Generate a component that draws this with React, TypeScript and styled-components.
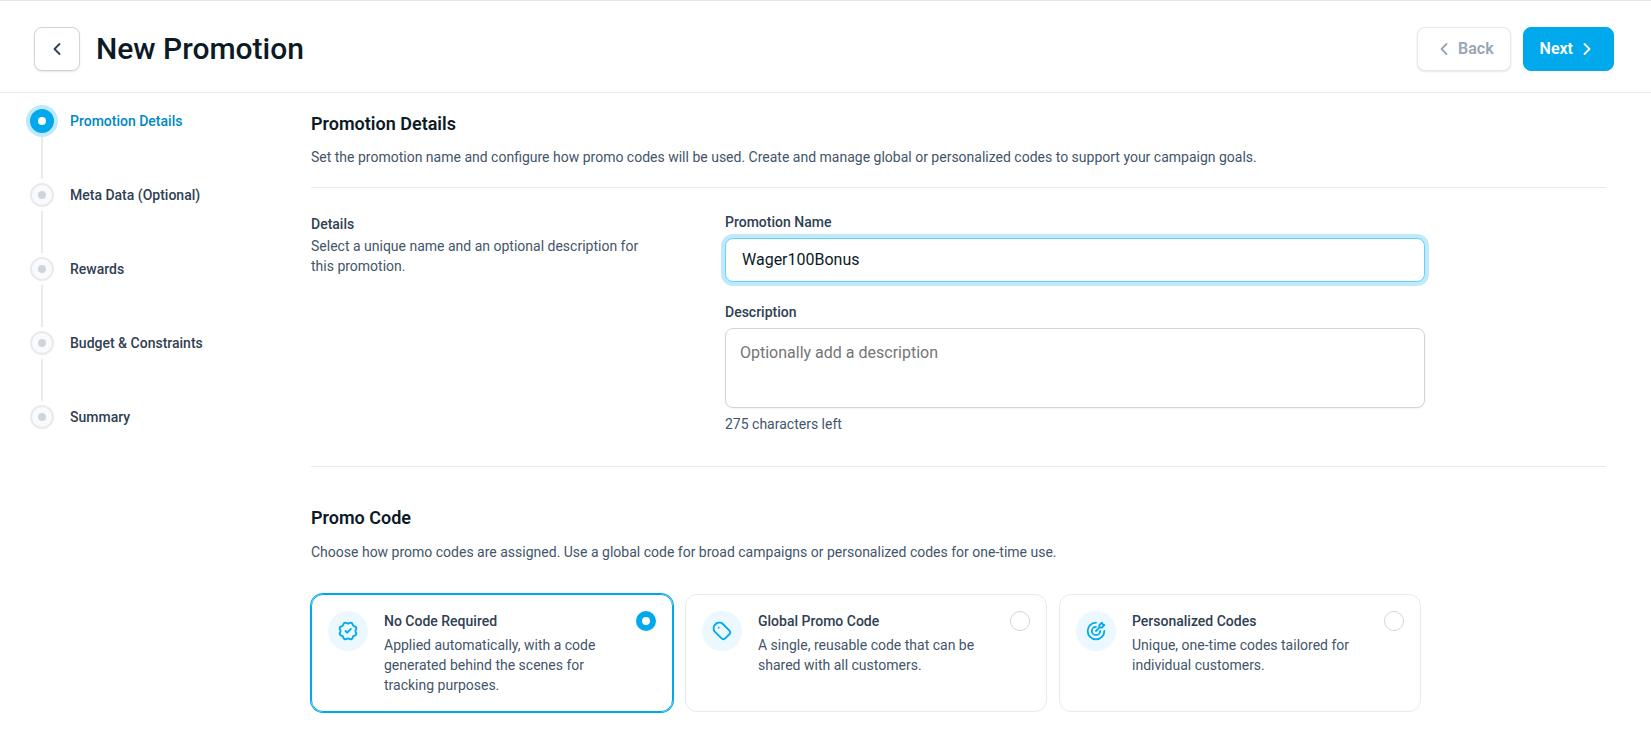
import React, { useState } from "react";
import styled, { createGlobalStyle, css } from "styled-components";

const color = {
  brand: "#00a9eb",
  brandText: "#0088c6",
  brandSoft: "#ebf8ff",
  brandRing: "#c0e9fb",
  brandBorder: "#62d3f8",
  ink: "#0c1a26",
  heading: "#2f4053",
  body: "#43556a",
  muted: "#98a5b5",
  line: "#e9eaec",
  field: "#cfd5dd",
};

const GlobalStyle = createGlobalStyle`
  *, *::before, *::after { box-sizing: border-box; }
  body {
    margin: 0;
    background: #fff;
    color: ${color.body};
    font-family: Roboto, "Liberation Sans", sans-serif;
    font-size: 14px;
    line-height: 20px;
  }
  h1, h2, h3, p, ol, fieldset { margin: 0; padding: 0; }
  button, input, textarea { font-family: inherit; }
`;

const Header = styled.header`
  display: flex;
  align-items: center;
  gap: 16px;
  padding: 26px 37px 21px 34px;
  border-top: 1px solid #e4e5e6;
  border-bottom: 1px solid ${color.line};
`;

const PageTitle = styled.h1`
  flex: 1;
  color: ${color.ink};
  font-size: 30px;
  line-height: 40px;
  font-weight: 500;
`;

const Actions = styled.div`
  display: flex;
  gap: 12px;
`;

const Button = styled.button<{ $kind: "outline" | "quiet" | "primary"; $iconOnly?: boolean }>`
  display: flex;
  align-items: center;
  justify-content: center;
  gap: 4px;
  height: 44px;
  padding: 0 ${(p) => (p.$iconOnly ? 12 : 16)}px;
  border: 1px solid ${color.field};
  border-radius: 8px;
  background: #fff;
  color: ${color.heading};
  font-size: 16px;
  line-height: 24px;
  font-weight: 600;
  box-shadow: 0 1px 2px rgba(16, 24, 40, 0.1);
  cursor: pointer;
  ${(p) =>
    p.$kind === "quiet" &&
    css`
      border-color: #e6e8eb;
      color: ${color.muted};
    `}
  ${(p) =>
    p.$kind === "primary" &&
    css`
      border-color: ${color.brand};
      background: ${color.brand};
      color: #fff;
      box-shadow: none;
    `}
`;

const Body = styled.div`
  display: flex;
  align-items: flex-start;
  padding: 16px 45px 28px 30px;
`;

const Steps = styled.ol`
  flex: 0 0 281px;
  list-style: none;
`;

const Step = styled.li<{ $active?: boolean }>`
  display: grid;
  grid-template-columns: 24px 1fr;
  column-gap: 16px;
  row-gap: 4px;
  align-items: center;
  margin-bottom: 4px;
  color: ${(p) => (p.$active ? color.brandText : color.heading)};
  font-weight: 500;
`;

const StepDot = styled.span<{ $active?: boolean }>`
  display: flex;
  align-items: center;
  justify-content: center;
  height: 24px;
  border: 2px solid ${(p) => (p.$active ? color.brand : "#e8eaed")};
  border-radius: 50%;
  background: ${(p) => (p.$active ? color.brand : "#f9fafc")};
  box-shadow: ${(p) => (p.$active ? `0 0 0 4px ${color.brandRing}` : "none")};

  &::before {
    content: "";
    width: 8px;
    height: 8px;
    border-radius: 50%;
    background: ${(p) => (p.$active ? "#fff" : "#cfd5dd")};
  }
`;

const StepLine = styled.span`
  justify-self: center;
  width: 2px;
  height: 42px;
  background: #e8eaed;
`;

const Content = styled.main`
  flex: 1;
  min-width: 0;
  padding-top: 1px;
`;

const SectionHead = styled.header<{ $ruled?: boolean }>`
  display: flex;
  flex-direction: column;
  gap: 10px;
  ${(p) =>
    p.$ruled &&
    css`
      gap: 9px;
      padding-bottom: 20px;
      border-bottom: 1px solid ${color.line};
    `}
`;

const SectionTitle = styled.h2`
  color: ${color.ink};
  font-size: 18px;
  line-height: 28px;
  font-weight: 600;
`;

const DetailsRow = styled.section`
  display: flex;
  padding: 24px 0 32px;
  border-bottom: 1px solid ${color.line};
`;

const Intro = styled.div`
  flex: 0 0 414px;
  display: flex;
  flex-direction: column;
  gap: 2px;
  padding: 2px 80px 0 0;
`;

const ItemTitle = styled.h3`
  color: ${color.heading};
  font-size: 14px;
  line-height: 20px;
  font-weight: 500;
`;

const Fields = styled.div`
  flex: 1;
  max-width: 700px;
  display: flex;
  flex-direction: column;
  gap: 20px;
`;

const Field = styled.div`
  display: flex;
  flex-direction: column;
  gap: 6px;
`;

const Label = styled.label`
  color: ${color.heading};
  font-weight: 500;
`;

const fieldBox = css`
  display: block;
  width: 100%;
  border: 1px solid ${color.field};
  border-radius: 8px;
  background: #fff;
  color: ${color.ink};
  font-size: 16px;
  line-height: 24px;
  outline: none;
`;

const TextInput = styled.input`
  ${fieldBox}
  height: 44px;
  padding: 0 16px 2px;
  border-color: ${color.brandBorder};
  box-shadow: 0 0 0 4px ${color.brandRing};
`;

const TextArea = styled.textarea`
  ${fieldBox}
  height: 80px;
  padding: 12px 14px;
  resize: none;
  box-shadow: 0 1px 2px rgba(16, 24, 40, 0.05);

  &::placeholder {
    color: #757575;
  }
`;

const CodeSection = styled.section`
  padding-top: 37px;
`;

const Cards = styled.fieldset`
  display: grid;
  grid-template-columns: repeat(3, 1fr);
  gap: 12px;
  max-width: 1110px;
  margin-top: 32px;
  border: 0;
`;

const Card = styled.label<{ $selected: boolean }>`
  display: flex;
  align-items: flex-start;
  gap: 16px;
  padding: 16px;
  border: 1px solid ${(p) => (p.$selected ? color.brand : color.line)};
  border-radius: 12px;
  box-shadow: ${(p) => (p.$selected ? `0 0 0 1px ${color.brand}` : "none")};
  cursor: pointer;
`;

const CardIcon = styled.span`
  flex: none;
  display: flex;
  align-items: center;
  justify-content: center;
  width: 40px;
  height: 40px;
  border-radius: 50%;
  background: ${color.brandSoft};
  color: ${color.brand};
`;

const CardText = styled.span`
  flex: 1;
  display: flex;
  flex-direction: column;
  gap: 4px;
`;

const CardTitle = styled.span`
  color: ${color.heading};
  font-weight: 500;
`;

const Radio = styled.input`
  appearance: none;
  flex: none;
  width: 20px;
  height: 20px;
  margin: 0;
  border: 1px solid ${color.field};
  border-radius: 50%;
  background: #fff;

  &:checked {
    border: 6px solid ${color.brand};
  }
`;

const Svg = ({ d, weight = 2.2 }: { d: string; weight?: number }) => (
  <svg
    width={20}
    height={20}
    viewBox="0 0 24 24"
    fill="none"
    stroke="currentColor"
    strokeWidth={weight}
    strokeLinecap="round"
    strokeLinejoin="round"
    aria-hidden="true"
  >
    <path d={d} />
  </svg>
);

const icons = {
  left: "M15 18L9 12L15 6",
  right: "M9 18L15 12L9 6",
  verified:
    "M9 12L11 14L15.5 9.5M17.9 5C18.107 5.497 18.502 5.892 19 6.099L20.745 6.822C21.243 7.028 21.639 7.424 21.845 7.922C22.052 8.42 22.052 8.98 21.845 9.478L21.123 11.222C20.916 11.72 20.916 12.28 21.123 12.778L21.845 14.522C22.052 15.02 22.052 15.58 21.845 16.078C21.639 16.576 21.243 16.972 20.745 17.178L19 17.901C18.502 18.107 18.107 18.502 17.9 19L17.177 20.745C16.971 21.243 16.575 21.639 16.077 21.845C15.579 22.052 15.02 22.052 14.522 21.845L12.778 21.123C12.28 20.917 11.72 20.917 11.222 21.123L9.477 21.845C8.979 22.052 8.42 22.052 7.922 21.845C7.424 21.639 7.029 21.243 6.823 20.745L6.1 19C5.893 18.502 5.498 18.107 5 17.9L3.255 17.177C2.757 16.971 2.362 16.575 2.155 16.078C1.949 15.58 1.949 15.02 2.155 14.522L2.877 12.778C3.083 12.28 3.083 11.72 2.877 11.222L2.155 9.478C1.949 8.98 1.949 8.42 2.155 7.922C2.362 7.424 2.757 7.028 3.255 6.822L5 6.099C5.497 5.892 5.892 5.497 6.1 5L6.822 3.255C7.028 2.757 7.424 2.361 7.922 2.155C8.42 1.948 8.98 1.948 9.478 2.155L11.222 2.877C11.72 3.083 12.28 3.083 12.778 2.877L14.522 2.155C15.02 1.949 15.58 1.949 16.078 2.155C16.576 2.362 16.972 2.757 17.178 3.255Z",
  tag: "M8 8H8.01M2 9.8V7.8C2 6.7 2.3 5.9 3 5.2L5.2 3C5.9 2.3 6.7 2 7.8 2H9.8C10.9 2 11.7 2.3 12.4 3L20.6 11.2C22.2 12.8 22.2 14.6 20.6 16.2L16.2 20.6C14.6 22.2 12.8 22.2 11.2 20.6L3 12.4C2.3 11.7 2 10.9 2 9.8Z",
  target:
    "M16 8V5L19 2L20 4L22 5L19 8H16ZM16 8L12 12M22 12C22 17.523 17.523 22 12 22C6.477 22 2 17.523 2 12C2 6.477 6.477 2 12 2M17 12C17 14.761 14.761 17 12 17C9.239 17 7 14.761 7 12C7 9.239 9.239 7 12 7",
};

const steps = ["Promotion Details", "Meta Data (Optional)", "Rewards", "Budget & Constraints", "Summary"];

const codeTypes = [
  {
    id: "none",
    icon: icons.verified,
    title: "No Code Required",
    text: "Applied automatically, with a code generated behind the scenes for tracking purposes.",
  },
  {
    id: "global",
    icon: icons.tag,
    title: "Global Promo Code",
    text: "A single, reusable code that can be shared with all customers.",
  },
  {
    id: "personal",
    icon: icons.target,
    title: "Personalized Codes",
    text: "Unique, one-time codes tailored for individual customers.",
  },
];

const MAX_DESCRIPTION = 275;

export default function App() {
  const [name, setName] = useState("Wager100Bonus");
  const [description, setDescription] = useState("");
  const [codeType, setCodeType] = useState("none");

  return (
    <>
      <GlobalStyle />
      <Header>
        <Button type="button" $kind="outline" $iconOnly aria-label="Go back">
          <Svg d={icons.left} />
        </Button>
        <PageTitle>New Promotion</PageTitle>
        <Actions>
          <Button type="button" $kind="quiet">
            <Svg d={icons.left} />
            Back
          </Button>
          <Button type="button" $kind="primary">
            Next
            <Svg d={icons.right} />
          </Button>
        </Actions>
      </Header>

      <Body>
        <Steps>
          {steps.map((step, i) => (
            <Step key={step} $active={i === 0} aria-current={i === 0 ? "step" : undefined}>
              <StepDot $active={i === 0} />
              <span>{step}</span>
              {i < steps.length - 1 && <StepLine />}
            </Step>
          ))}
        </Steps>

        <Content>
          <SectionHead $ruled>
            <SectionTitle>Promotion Details</SectionTitle>
            <p>
              Set the promotion name and configure how promo codes will be used. Create and manage global or
              personalized codes to support your campaign goals.
            </p>
          </SectionHead>

          <DetailsRow>
            <Intro>
              <ItemTitle>Details</ItemTitle>
              <p>Select a unique name and an optional description for this promotion.</p>
            </Intro>
            <Fields>
              <Field>
                <Label htmlFor="promotion-name">Promotion Name</Label>
                <TextInput id="promotion-name" value={name} onChange={(e) => setName(e.target.value)} />
              </Field>
              <Field>
                <Label htmlFor="promotion-description">Description</Label>
                <TextArea
                  id="promotion-description"
                  placeholder="Optionally add a description"
                  maxLength={MAX_DESCRIPTION}
                  value={description}
                  onChange={(e) => setDescription(e.target.value)}
                />
                <p>{MAX_DESCRIPTION - description.length} characters left</p>
              </Field>
            </Fields>
          </DetailsRow>

          <CodeSection>
            <SectionHead>
              <SectionTitle>Promo Code</SectionTitle>
              <p>
                Choose how promo codes are assigned. Use a global code for broad campaigns or personalized codes for
                one-time use.
              </p>
            </SectionHead>
            <Cards aria-label="Promo code type">
              {codeTypes.map((type) => (
                <Card key={type.id} $selected={codeType === type.id}>
                  <CardIcon>
                    <Svg d={type.icon} />
                  </CardIcon>
                  <CardText>
                    <CardTitle>{type.title}</CardTitle>
                    <span>{type.text}</span>
                  </CardText>
                  <Radio
                    type="radio"
                    name="code-type"
                    checked={codeType === type.id}
                    onChange={() => setCodeType(type.id)}
                  />
                </Card>
              ))}
            </Cards>
          </CodeSection>
        </Content>
      </Body>
    </>
  );
}
